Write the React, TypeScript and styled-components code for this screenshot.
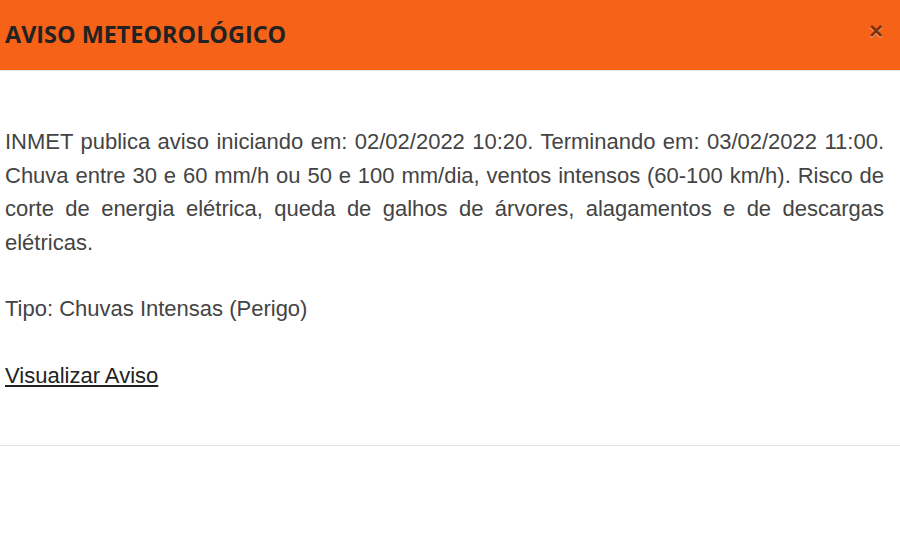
import React from "react";
import styled, { createGlobalStyle } from "styled-components";

const Global = createGlobalStyle`
  html, body { margin: 0; padding: 0; background: #fff; }
  body { font-family: "Liberation Sans", Arial, sans-serif; }
`;

const Modal = styled.div`
  width: 900px;
  background: #fff;
`;

const Header = styled.header`
  height: 71px;
  box-sizing: border-box;
  background: #f56218;
  border-bottom: 1px solid #e5e5e5;
  display: flex;
  align-items: center;
  justify-content: space-between;
  padding: 0 16px 0 5px;
`;

const Title = styled.h4`
  margin: 0 0 2px;
  font-family: "Open Sans", sans-serif;
  font-weight: 700;
  font-size: 23.4px;
  color: #222;
`;

const Close = styled.button`
  border: 0;
  background: transparent;
  padding: 0;
  font-family: "Liberation Sans", Arial, sans-serif;
  font-size: 24px;
  font-weight: 700;
  line-height: 1;
  color: #000;
  opacity: 0.5;
  text-shadow: 0 1px 0 #fff;
  cursor: pointer;
  margin-top: -8px;
  margin-right: 1px;
`;

const Body = styled.div`
  padding: 54px 16px 53px 5px;
  border-bottom: 1px solid #e3e3e3;
`;

const Paragraph = styled.p`
  margin: 0 0 33px;
  font-size: 22px;
  line-height: 33.5px;
  color: #444;
  text-align: justify;
`;

const Link = styled.a`
  font-size: 22px;
  line-height: 33.5px;
  color: #222;
  text-decoration: underline;
`;

export default function App() {
  return (
    <>
      <Global />
      <Modal>
        <Header>
          <Title>AVISO METEOROLÓGICO</Title>
          <Close aria-label="Fechar">×</Close>
        </Header>
        <Body>
          <Paragraph>
            INMET publica aviso iniciando em: 02/02/2022 10:20. Terminando em: 03/02/2022 11:00.
            Chuva entre 30 e 60 mm/h ou 50 e 100 mm/dia, ventos intensos (60-100 km/h). Risco de
            corte de energia elétrica, queda de galhos de árvores, alagamentos e de descargas
            elétricas.
          </Paragraph>
          <Paragraph>Tipo: Chuvas Intensas (Perigo)</Paragraph>
          <Link href="#">Visualizar Aviso</Link>
        </Body>
      </Modal>
    </>
  );
}
